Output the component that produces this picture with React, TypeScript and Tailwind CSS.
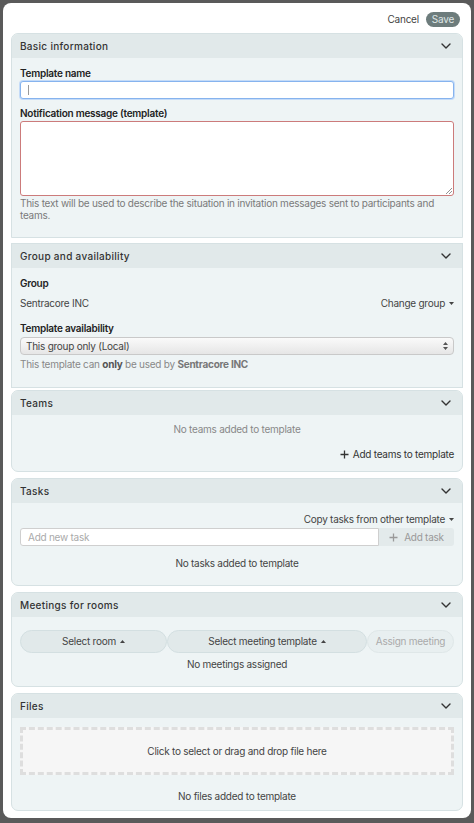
import React from "react";

const FONT = { fontFamily: "Inter, 'Noto Sans', sans-serif" };

function Chevron(): React.JSX.Element {
  return (
    <svg width="10" height="6" viewBox="0 0 10 6" fill="none" className="text-[#333]">
      <path d="M1 1l4 4 4-4" stroke="currentColor" strokeWidth="1.4" strokeLinecap="round" strokeLinejoin="round" />
    </svg>
  );
}

function Caret({ up }: { up?: boolean }): React.JSX.Element {
  return (
    <svg width="5" height="3" viewBox="0 0 5 3" className="ml-[4px] inline-block">
      <path d={up ? "M0 3L2.5 0 5 3z" : "M0 0l2.5 3L5 0z"} fill="currentColor" />
    </svg>
  );
}

function Plus({ className }: { className?: string }): React.JSX.Element {
  return (
    <svg width="9" height="9" viewBox="0 0 9 9" className={className}>
      <path d="M4.5 0.5v8M0.5 4.5h8" stroke="currentColor" strokeWidth="1.3" />
    </svg>
  );
}

type CardProps = {
  title: string;
  className?: string;
  bodyClass?: string;
  children: React.ReactNode;
};

function Card({ title, className, bodyClass, children }: CardProps): React.JSX.Element {
  return (
    <section className={`overflow-hidden rounded-[7px] border border-[#d6e1e3] bg-[#eef4f5] ${className ?? ""}`}>
      <div className="flex h-[24px] items-center justify-between bg-[#e1e9ea] pr-[11px] pl-[8px]">
        <h2 className="text-[10px] font-medium tracking-[0.3px] text-[#333]">{title}</h2>
        <Chevron />
      </div>
      <div className={`px-[8px] ${bodyClass ?? ""}`}>{children}</div>
    </section>
  );
}

export default function App(): React.JSX.Element {
  return (
    <div className="h-[823px] w-[474px] bg-[#5a5a5a] p-[3px] tracking-[-0.25px]" style={FONT}>
      <div className="flex h-[815px] flex-col rounded-[8px] bg-white px-[8px] pt-[9px]">
        {/* header actions */}
        <div className="flex h-[15px] items-center justify-end gap-[7px] pr-[3px]">
          <button type="button" className="text-[10px] text-[#444]">
            Cancel
          </button>
          <button type="button" className="h-[15px] rounded-full bg-[#6d7c7c] px-[6px] text-[10px] leading-[15px] text-[#dfe6e6]">
            Save
          </button>
        </div>

        {/* Basic information */}
        <Card title="Basic information" className="mt-[6px] rounded-b-none" bodyClass="pt-[8px] pb-[16px]">
          <label className="block text-[10px] leading-[14px] font-semibold text-[#222]">Template name</label>
          <div className="mt-[1px] flex h-[18px] items-center rounded-[3px] border border-[#86b3ee] bg-white px-[7px] shadow-[0_0_0_1px_#c4dbf8]">
            <span className="h-[10px] w-[1px] bg-[#999]" />
          </div>
          <label className="mt-[7px] block text-[10px] leading-[14px] font-semibold text-[#222]">
            Notification message (template)
          </label>
          <div className="relative mt-[1px] h-[75px] rounded-[3px] border border-[#cc7b7b] bg-white">
            <svg width="6" height="6" viewBox="0 0 6 6" className="absolute right-[1px] bottom-[1px]">
              <path d="M6 0L0 6M6 3L3 6" stroke="#777" strokeWidth="0.8" />
            </svg>
          </div>
          <p className="mt-[1px] text-[10px] leading-[12px] text-[#7a7a7a]">
            This text will be used to describe the situation in invitation messages sent to participants and teams.
          </p>
        </Card>

        {/* Group and availability */}
        <Card title="Group and availability" className="mt-[5px] rounded-none" bodyClass="pt-[8px] pb-[17px]">
          <div className="text-[10px] leading-[14px] font-semibold text-[#222]">Group</div>
          <div className="mt-[6px] flex items-center justify-between text-[10px] leading-[14px] text-[#444]">
            <span>Sentracore INC</span>
            <span className="flex items-center">
              Change group
              <Caret />
            </span>
          </div>
          <div className="mt-[11px] text-[10px] leading-[14px] font-semibold text-[#222]">Template availability</div>
          <div className="mt-[2px] flex h-[18px] items-center justify-between rounded-[4px] border border-[#c9c9c9] bg-gradient-to-b from-[#fafafa] to-[#e6e6e6] px-[5px] text-[10px] text-[#444]">
            <span>This group only (Local)</span>
            <svg width="5" height="8" viewBox="0 0 5 8">
              <path d="M0 3L2.5 0 5 3zM0 5l2.5 3L5 5z" fill="#555" />
            </svg>
          </div>
          <p className="mt-[3px] text-[10px] leading-[12px] text-[#888]">
            This template can <b className="text-[#555]">only</b> be used by{" "}
            <b className="text-[#777]">Sentracore INC</b>
          </p>
        </Card>

        {/* Teams */}
        <Card title="Teams" className="mt-[2px]" bodyClass="pt-[7px] pb-[10px]">
          <div className="text-center text-[10px] leading-[14px] text-[#888]">No teams added to template</div>
          <div className="mt-[11px] flex items-center justify-end text-[10px] leading-[14px] text-[#333]">
            <Plus className="mr-[4px] text-[#333]" />
            Add teams to template
          </div>
        </Card>

        {/* Tasks */}
        <Card title="Tasks" className="mt-[6px]" bodyClass="pt-[9px] pb-[15px]">
          <div className="flex items-center justify-end text-[10px] leading-[14px] text-[#444]">
            Copy tasks from other template
            <Caret />
          </div>
          <div className="mt-[2px] flex h-[18px]">
            <div className="flex flex-1 items-center rounded-l-[3px] border border-[#cfcfcf] bg-white px-[7px] text-[10px] text-[#aaa]">
              Add new task
            </div>
            <button
              type="button"
              className="flex w-[75px] items-center justify-center rounded-r-[3px] bg-[#e3eaeb] text-[10px] text-[#999]"
            >
              <Plus className="mr-[6px] text-[#999]" />
              Add task
            </button>
          </div>
          <div className="mt-[10px] text-center text-[10px] leading-[14px] text-[#444]">No tasks added to template</div>
        </Card>

        {/* Meetings for rooms */}
        <Card title="Meetings for rooms" className="mt-[6px]" bodyClass="pt-[13px] pb-[15px]">
          <div className="flex h-[23px] text-[10px] text-[#444]">
            <button
              type="button"
              className="flex w-[147px] items-center justify-center rounded-full border border-[#d3dfe1] bg-[#e1e9ea]"
            >
              Select room
              <Caret up />
            </button>
            <button
              type="button"
              className="flex w-[200px] items-center justify-center rounded-full border border-[#d3dfe1] bg-[#e1e9ea]"
            >
              Select meeting template
              <Caret up />
            </button>
            <button
              type="button"
              className="flex flex-1 items-center justify-center rounded-full border border-[#dfe7e8] bg-[#e8eff0] text-[#aaa]"
            >
              Assign meeting
            </button>
          </div>
          <div className="mt-[4px] text-center text-[10px] leading-[14px] text-[#444]">No meetings assigned</div>
        </Card>

        {/* Files */}
        <Card title="Files" className="mt-[6px]" bodyClass="pt-[9px] pb-[7px]">
          <div className="flex h-[48px] items-center justify-center border-[3px] border-dashed border-[#dedede] bg-[#f6f6f6] text-[10px] text-[#444]">
            Click to select or drag and drop file here
          </div>
          <div className="mt-[14px] text-center text-[10px] leading-[14px] text-[#444]">No files added to template</div>
        </Card>
      </div>
    </div>
  );
}
